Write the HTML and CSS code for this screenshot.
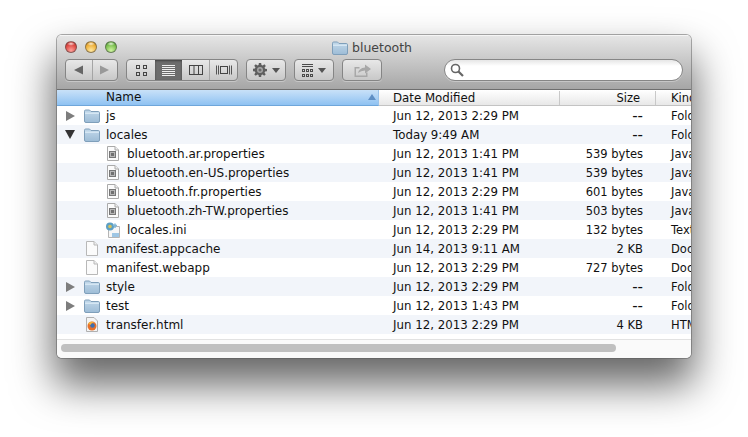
FILE: index.html
```html
<!DOCTYPE html>
<html lang="en">
<head>
<meta charset="utf-8">
<title>bluetooth</title>
<link rel="stylesheet" href="styles.css">
</head>
<body>
<svg class="defs" width="0" height="0" aria-hidden="true">
  <defs>
    <linearGradient id="fg" x1="0" y1="0" x2="0" y2="1"><stop offset="0" stop-color="#c2d8ea"/><stop offset="1" stop-color="#9dbcd6"/></linearGradient>
    <symbol id="folder" viewBox="0 0 16 14">
      <path d="M.5 12V2.200Q.5 1 1.700 1H5.500L7 2.500H14.300Q15.500 2.500 15.500 3.700V12Q15.500 13.500 14 13.500H2Q.5 13.500 .5 12Z" fill="url(#fg)" stroke="#7f9fba"/>
      <path d="M1 4.200H15" stroke="#e3f0f9" fill="none"/>
    </symbol>
    <symbol id="doc" viewBox="0 0 12 15">
      <path d="M.5.5H8L11.500 4V14.500H.5Z" fill="#fbfbfb" stroke="#b8b8b8"/>
      <path d="M8 .5V4H11.500" fill="#eee" stroke="#b8b8b8"/>
    </symbol>
    <symbol id="prop" viewBox="0 0 12 15">
      <path d="M.5.5H8L11.500 4V14.500H.5Z" fill="#fbfbfb" stroke="#aaa"/>
      <path d="M8 .5V4H11.500" fill="#eee" stroke="#aaa"/>
      <rect x="2.500" y="5.500" width="6" height="6" fill="#b8b8b8" stroke="#777"/>
      <rect x="4" y="7" width="3" height="3" fill="#707070"/>
    </symbol>
    <symbol id="ini" viewBox="0 0 16 16">
      <path d="M3.500 4.500H14.500V15.500H3.500Z" fill="#f6f6f6" stroke="#b5b5b5"/>
      <rect x="7" y="11" width="7" height="4" fill="#9ec6e4"/>
      <circle cx="5" cy="4.500" r="4" fill="#5d9fc4"/>
      <circle cx="5" cy="4.500" r="1.800" fill="#d5c25a"/>
      <path d="M10 1.500V6M8 3.500H12" stroke="#7fb6d6" stroke-width="1.500"/>
    </symbol>
    <symbol id="fx" viewBox="0 0 12 15">
      <path d="M.5.5H8L11.500 4V14.500H.5Z" fill="#f4f4f4" stroke="#b0b0b0"/>
      <circle cx="6" cy="9" r="4.500" fill="#e8702a"/>
      <circle cx="6.500" cy="8.500" r="2.300" fill="#3f6fb0"/>
      <path d="M2 6.500Q5 3.500 8.500 5.500Q5 5.500 4.500 8Z" fill="#f3b53a"/>
    </symbol>
  </defs>
</svg>

<main class="window">
  <header class="chrome">
    <div class="titlebar">
      <div class="lights">
        <span class="light red"></span><span class="light amber"></span><span class="light green"></span>
      </div>
      <div class="title"><svg class="title-icon"><use href="#folder"/></svg><span>bluetooth</span></div>
    </div>
    <div class="toolbar">
      <div class="btn nav">
        <span class="seg seg-nav"><svg width="9" height="10" viewBox="0 0 9 10"><path d="M9 .5V9.500L0 5Z" fill="#666"/></svg></span>
        <span class="seg seg-nav"><svg width="9" height="10" viewBox="0 0 9 10"><path d="M0 .5V9.500L9 5Z" fill="#999"/></svg></span>
      </div>
      <div class="btn views">
        <span class="seg seg-view first"><svg width="11" height="11" viewBox="0 0 11 11" fill="none" stroke="#444"><rect x=".5" y=".5" width="3" height="3"/><rect x="7.500" y=".5" width="3" height="3"/><rect x=".5" y="7.500" width="3" height="3"/><rect x="7.500" y="7.500" width="3" height="3"/></svg></span>
        <span class="seg seg-view active"><svg width="13" height="11" viewBox="0 0 13 11" stroke="#eee"><path d="M0 .5H13M0 2.500H13M0 4.500H13M0 6.500H13M0 8.500H13M0 10.500H13"/></svg></span>
        <span class="seg seg-view"><svg width="14" height="10" viewBox="0 0 14 10" fill="none" stroke="#444"><rect x=".5" y=".5" width="13" height="9"/><path d="M5 .5V9.500M9.500 .5V9.500"/></svg></span>
        <span class="seg seg-view divided"><svg width="16" height="10" viewBox="0 0 16 10" fill="none" stroke="#555"><path d="M.5 .5V9.500M2.500 .5V9.500M13.500 .5V9.500M15.500 .5V9.500"/><rect x="4.500" y="1.500" width="7" height="7" stroke="#444"/></svg></span>
      </div>
      <div class="btn menu">
        <svg width="14" height="14" viewBox="0 0 16 16"><path d="M6.700 0H9.300L9.700 2.300 11.100 2.900 13 1.500 14.700 3.300 13.200 5.100 13.800 6.500 16 6.800V9.300L13.800 9.600 13.200 11 14.600 12.900 12.800 14.600 11 13.200 9.600 13.800 9.300 16H6.700L6.400 13.800 5 13.200 3.100 14.600 1.400 12.800 2.800 11 2.200 9.600 0 9.300V6.700L2.200 6.400 2.800 5 1.400 3.200 3.200 1.400 5 2.800 6.400 2.200Z" fill="#5f5f5f"/><circle cx="8" cy="8" r="3.400" fill="#a8a8a8"/><circle cx="8" cy="8" r="1.800" fill="#6a6a6a"/></svg>
        <i class="caret"></i>
      </div>
      <div class="btn menu">
        <svg width="11" height="13" viewBox="0 0 11 13" stroke="#4a4a4a" fill="none"><path d="M0 .5H11M0 2.500H11"/><rect x=".5" y="5.500" width="2" height="2"/><rect x="4.500" y="5.500" width="2" height="2"/><rect x="8.500" y="5.500" width="2" height="2"/><rect x=".5" y="10.500" width="2" height="2"/><rect x="4.500" y="10.500" width="2" height="2"/><rect x="8.500" y="10.500" width="2" height="2"/></svg>
        <i class="caret"></i>
      </div>
      <div class="btn share">
        <svg width="17" height="14" viewBox="0 0 17 14"><path d="M.5 4H5.500V5.500H2V12.500H12V9.500H13.500V14H.5Z" fill="#a8a8a8"/><path d="M4 10Q5 5 11 4.500V1.500L17 6 11 10.500V7.500Q7 7.500 4 10Z" fill="#a8a8a8"/></svg>
      </div>
      <div class="search">
        <svg width="14" height="14" viewBox="0 0 14 14" fill="none" stroke="#666"><circle cx="5.500" cy="5.500" r="4" stroke-width="1.600"/><path d="M8.500 8.500L13 13" stroke-width="2.200"/></svg>
      </div>
    </div>
  </header>

  <div class="head">
    <div class="col name head-name"><span>Name</span><i class="sort"></i></div>
    <div class="col date"><span>Date Modified</span></div>
    <div class="col size"><span>Size</span></div>
    <div class="col kind"><span>Kind</span></div>
  </div>

  <div class="list">
    <div class="row"><div class="col name"><i class="tri"></i><svg class="ico folder"><use href="#folder"/></svg><span>js</span></div><div class="col date">Jun 12, 2013 2:29 PM</div><div class="col size dash">--</div><div class="col kind">Folder</div></div>
    <div class="row"><div class="col name"><i class="tri open"></i><svg class="ico folder"><use href="#folder"/></svg><span>locales</span></div><div class="col date">Today 9:49 AM</div><div class="col size dash">--</div><div class="col kind">Folder</div></div>
    <div class="row"><div class="col name sub"><svg class="ico file"><use href="#prop"/></svg><span>bluetooth.ar.properties</span></div><div class="col date">Jun 12, 2013 1:41 PM</div><div class="col size">539 bytes</div><div class="col kind">Java</div></div>
    <div class="row"><div class="col name sub"><svg class="ico file"><use href="#prop"/></svg><span>bluetooth.en-US.properties</span></div><div class="col date">Jun 12, 2013 1:41 PM</div><div class="col size">539 bytes</div><div class="col kind">Java</div></div>
    <div class="row"><div class="col name sub"><svg class="ico file"><use href="#prop"/></svg><span>bluetooth.fr.properties</span></div><div class="col date">Jun 12, 2013 2:29 PM</div><div class="col size">601 bytes</div><div class="col kind">Java</div></div>
    <div class="row"><div class="col name sub"><svg class="ico file"><use href="#prop"/></svg><span>bluetooth.zh-TW.properties</span></div><div class="col date">Jun 12, 2013 1:41 PM</div><div class="col size">503 bytes</div><div class="col kind">Java</div></div>
    <div class="row"><div class="col name sub"><svg class="ico file wide"><use href="#ini"/></svg><span>locales.ini</span></div><div class="col date">Jun 12, 2013 2:29 PM</div><div class="col size">132 bytes</div><div class="col kind">Text</div></div>
    <div class="row"><div class="col name top"><svg class="ico file"><use href="#doc"/></svg><span>manifest.appcache</span></div><div class="col date">Jun 14, 2013 9:11 AM</div><div class="col size">2 KB</div><div class="col kind">Docu</div></div>
    <div class="row"><div class="col name top"><svg class="ico file"><use href="#doc"/></svg><span>manifest.webapp</span></div><div class="col date">Jun 12, 2013 2:29 PM</div><div class="col size">727 bytes</div><div class="col kind">Docu</div></div>
    <div class="row"><div class="col name"><i class="tri"></i><svg class="ico folder"><use href="#folder"/></svg><span>style</span></div><div class="col date">Jun 12, 2013 2:29 PM</div><div class="col size dash">--</div><div class="col kind">Folder</div></div>
    <div class="row"><div class="col name"><i class="tri"></i><svg class="ico folder"><use href="#folder"/></svg><span>test</span></div><div class="col date">Jun 12, 2013 1:43 PM</div><div class="col size dash">--</div><div class="col kind">Folder</div></div>
    <div class="row"><div class="col name top"><svg class="ico file"><use href="#fx"/></svg><span>transfer.html</span></div><div class="col date">Jun 12, 2013 2:29 PM</div><div class="col size">4 KB</div><div class="col kind">HTML</div></div>
  </div>

  <div class="scrollbar"><div class="thumb"></div></div>
</main>
</body>
</html>
```

FILE: styles.css
```css
* { box-sizing: border-box; }
html, body { margin: 0; height: 100%; background: #fff; overflow: hidden; }
body { padding: 35px 0 0 57px; font-family: "DejaVu Sans", sans-serif; font-size: 11.5px; color: #111; }
.defs { display: block; height: 0; }

.window {
  width: 634px;
  height: 323px;
  display: flex;
  flex-direction: column;
  background: #fff;
  border-radius: 5px;
  overflow: hidden;
  box-shadow: 0 0 0 1px rgba(90,90,90,.5), 0 24px 42px 3px rgba(0,0,0,.6);
}

.chrome {
  height: 55px;
  background: linear-gradient(#e6e6e6, #a6a6a6);
  border-bottom: 1px solid #6e6e6e;
  box-shadow: inset 0 1px 0 #f5f5f5;
  flex: none;
  padding: 0 8px;
}
.titlebar { height: 24px; display: flex; align-items: center; position: relative; }
.lights { display: flex; gap: 8px; }
.light { width: 12px; height: 12px; border-radius: 50%; border: 1px solid rgba(70,70,70,.55); }
.red { background: radial-gradient(ellipse 4px 2px at 50% 18%, rgba(255,255,255,.8), transparent), radial-gradient(circle at 50% 85%, #ffa09a, #de4a44 60%, #b32a26); }
.amber { background: radial-gradient(ellipse 4px 2px at 50% 18%, rgba(255,255,255,.8), transparent), radial-gradient(circle at 50% 85%, #ffe8a0, #eeb03a 60%, #bf8116); }
.green { background: radial-gradient(ellipse 4px 2px at 50% 18%, rgba(255,255,255,.8), transparent), radial-gradient(circle at 50% 85%, #d0f5a0, #7cc050 60%, #48902c); }
.title {
  position: absolute; left: 267px; top: 5px;
  display: flex; align-items: center; gap: 4px;
  font-size: 12.5px; color: #444; height: 15px;
}
.title-icon { width: 16px; height: 14px; }

.toolbar { height: 22px; display: flex; gap: 8px; }
.btn {
  height: 22px;
  display: flex;
  align-items: center;
  justify-content: center;
  border: 1px solid #858585;
  border-radius: 4px;
  background: linear-gradient(#e8e8e8, #c8c8c8);
  box-shadow: 0 1px 0 rgba(255,255,255,.3);
  overflow: hidden;
}
.nav { width: 53px; }
.views { width: 112px; }
.menu { width: 40px; gap: 5px; }
.share { width: 40px; }
.seg { height: 100%; display: flex; align-items: center; justify-content: center; }
.seg-nav { width: 50%; }
.seg-nav + .seg-nav { border-left: 1px solid #a5a5a5; }
.seg-view { width: 27px; flex: none; }
.first { width: 28px; }
.divided { width: 28px; border-left: 1px solid #a5a5a5; }
.active { background: #6c6c6c; box-shadow: inset 0 1px 2px rgba(0,0,0,.4); }
.caret { width: 0; height: 0; border: 4px solid transparent; border-top: 5px solid #555; border-bottom: 0; }
.search {
  width: 239px;
  height: 22px;
  margin-left: 54px;
  display: flex;
  align-items: center;
  padding-left: 5px;
  background: linear-gradient(#e6e6e6, #fff 30%);
  border: 1px solid #868686;
  border-radius: 11px;
  box-shadow: 0 1px 0 rgba(255,255,255,.3);
}

.head {
  height: 16px;
  flex: none;
  display: flex;
  background: linear-gradient(#fff, #e8e8e8);
  border-bottom: 1px solid #c3c3c3;
  padding-top: 1px;
  line-height: 15px;
}
.head .date { border-right: 1px solid #c8c8c8; }
.head .size { border-right: 1px solid #c8c8c8; padding-right: 15px; }
.head-name {
  background: linear-gradient(#c9e1f8, #8fc2f2);
  border-bottom: 1px solid #6fa6da;
  border-right: 1px solid #9cc4ea;
  height: 16px;
  margin-top: -1px;
  padding-left: 49px;
  justify-content: space-between;
}
.sort {
  width: 0; height: 0; margin: 0 2px 1px 0;
  border: 4px solid transparent; border-bottom: 6px solid #5f8fc4; border-top: 0;
}

.col { flex: none; white-space: nowrap; display: flex; align-items: center; overflow: hidden; }
.name { width: 322px; font-size: 12px; }
.date { width: 181px; padding-left: 14px; font-size: 11.8px; }
.size { width: 96px; justify-content: flex-end; padding-right: 13px; }
.dash { font-size: 15px; }
.kind { width: 35px; padding-left: 15px; overflow: hidden; }

.list { flex: 1; min-height: 0; }
.row { height: 19px; display: flex; }
.row:nth-child(even) { background: #f2f5fa; }
.row .name { padding-left: 9px; }
.row .name.top { padding-left: 29px; }
.row .name.sub { padding-left: 50px; }
.tri { width: 0; height: 0; flex: none; border: 5px solid transparent; border-left: 9px solid #7d7d7d; border-right: 0; margin-right: 9px; }
.tri.open { border: 5px solid transparent; border-top: 9px solid #333; border-bottom: 0; width: 0; margin-right: 9px; margin-left: -1px; }
.ico { flex: none; }
.folder { width: 16px; height: 14px; margin-right: 6px; }
.file { width: 12px; height: 15px; margin-right: 8px; }
.file.wide { width: 16px; height: 16px; margin: 0 6px 0 -2px; }

.scrollbar {
  height: 19px;
  flex: none;
  padding: 4px 2px 3px 4px;
  border-top: 1px solid #e2e2e2;
  background: #fafafa;
}
.thumb { width: 555px; height: 8px; border-radius: 4px; background: #c0c0c0; }
```
